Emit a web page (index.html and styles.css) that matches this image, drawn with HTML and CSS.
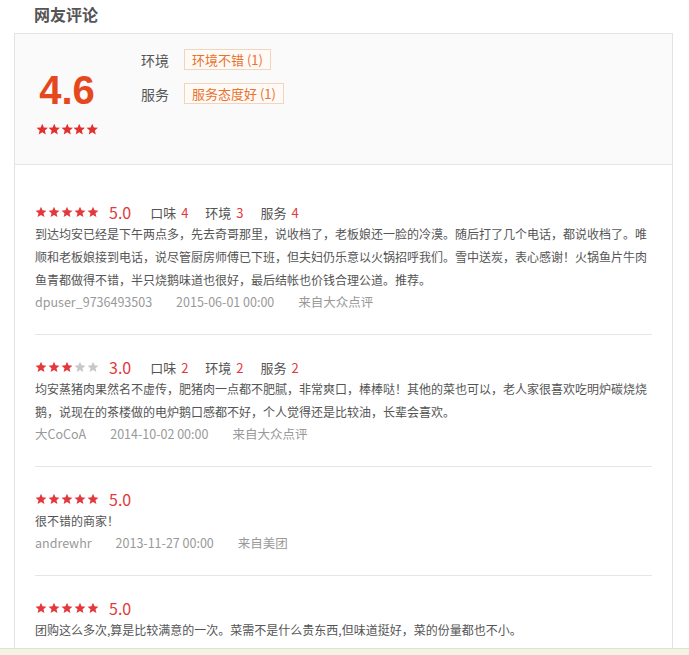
FILE: index.html
```html
<!DOCTYPE html>
<html lang="zh-CN">
<head>
<meta charset="UTF-8" />
<meta name="viewport" content="width=device-width, initial-scale=1" />
<title>网友评论</title>
<link rel="stylesheet" href="styles.css">
</head>
<body>
  <svg class="defs" aria-hidden="true">
    <symbol id="star" viewBox="0 0 24 24">
      <path d="M12 1.5l3.1 7.2 7.8.6-5.9 5.1 1.8 7.6L12 17.9 5.2 22l1.8-7.6-5.9-5.1 7.8-.6z"/>
    </symbol>
  </svg>

  <h2 class="title">网友评论</h2>

  <div class="comments">
    <div class="summary">
      <div class="score">
        <div class="score-num">4.6</div>
        <div class="stars stars-sm">
          <svg class="star"><use href="#star"/></svg>
          <svg class="star"><use href="#star"/></svg>
          <svg class="star"><use href="#star"/></svg>
          <svg class="star"><use href="#star"/></svg>
          <svg class="star"><use href="#star"/></svg>
        </div>
      </div>
      <div class="tags">
        <div class="tag-row">
          <span class="tag-label">环境</span>
          <span class="tag">环境不错 (1)</span>
        </div>
        <div class="tag-row">
          <span class="tag-label">服务</span>
          <span class="tag">服务态度好 (1)</span>
        </div>
      </div>
    </div>

    <ul class="review-list">
      <li class="review">
        <div class="rating">
          <div class="stars">
            <svg class="star"><use href="#star"/></svg>
            <svg class="star"><use href="#star"/></svg>
            <svg class="star"><use href="#star"/></svg>
            <svg class="star"><use href="#star"/></svg>
            <svg class="star"><use href="#star"/></svg>
          </div>
          <span class="rate">5.0</span>
          <span class="sub">口味 <em>4</em></span>
          <span class="sub">环境 <em>3</em></span>
          <span class="sub">服务 <em>4</em></span>
        </div>
        <p class="text">到达均安已经是下午两点多，先去奇哥那里，说收档了，老板娘还一脸的冷漠。随后打了几个电话，都说收档了。唯顺和老板娘接到电话，说尽管厨房师傅已下班，但夫妇仍乐意以火锅招呼我们。雪中送炭，表心感谢！火锅鱼片牛肉鱼青都做得不错，半只烧鹅味道也很好，最后结帐也价钱合理公道。推荐。</p>
        <div class="meta">
          <span>dpuser_9736493503</span>
          <span>2015-06-01 00:00</span>
          <span>来自大众点评</span>
        </div>
      </li>

      <li class="review">
        <div class="rating">
          <div class="stars">
            <svg class="star"><use href="#star"/></svg>
            <svg class="star"><use href="#star"/></svg>
            <svg class="star"><use href="#star"/></svg>
            <svg class="star off"><use href="#star"/></svg>
            <svg class="star off"><use href="#star"/></svg>
          </div>
          <span class="rate">3.0</span>
          <span class="sub">口味 <em>2</em></span>
          <span class="sub">环境 <em>2</em></span>
          <span class="sub">服务 <em>2</em></span>
        </div>
        <p class="text">均安蒸猪肉果然名不虚传，肥猪肉一点都不肥腻，非常爽口，棒棒哒！其他的菜也可以，老人家很喜欢吃明炉碳烧烧鹅，说现在的茶楼做的电炉鹅口感都不好，个人觉得还是比较油，长辈会喜欢。</p>
        <div class="meta">
          <span>大CoCoA</span>
          <span>2014-10-02 00:00</span>
          <span>来自大众点评</span>
        </div>
      </li>

      <li class="review">
        <div class="rating">
          <div class="stars">
            <svg class="star"><use href="#star"/></svg>
            <svg class="star"><use href="#star"/></svg>
            <svg class="star"><use href="#star"/></svg>
            <svg class="star"><use href="#star"/></svg>
            <svg class="star"><use href="#star"/></svg>
          </div>
          <span class="rate">5.0</span>
        </div>
        <p class="text">很不错的商家！</p>
        <div class="meta">
          <span>andrewhr</span>
          <span>2013-11-27 00:00</span>
          <span>来自美团</span>
        </div>
      </li>

      <li class="review">
        <div class="rating">
          <div class="stars">
            <svg class="star"><use href="#star"/></svg>
            <svg class="star"><use href="#star"/></svg>
            <svg class="star"><use href="#star"/></svg>
            <svg class="star"><use href="#star"/></svg>
            <svg class="star"><use href="#star"/></svg>
          </div>
          <span class="rate">5.0</span>
        </div>
        <p class="text">团购这么多次,算是比较满意的一次。菜需不是什么贵东西,但味道挺好，菜的份量都也不小。</p>
      </li>
    </ul>
  </div>

  <div class="bottom-bar"></div>
</body>
</html>
```

FILE: styles.css
```css
:root {
  --red: #e4393c;
  --orange: #e6481e;
  --text: #555;
  --muted: #999;
  --line: #e6e6e6;
}

body {
  margin: 0;
  background: #fff;
  color: var(--text);
  font-family: "Microsoft YaHei", "Noto Sans CJK SC", "Noto Sans", sans-serif;
  font-size: 12px;
}

.defs {
  display: none;
}

.title {
  margin: 0;
  padding-left: 34px;
  height: 33px;
  line-height: 28px;
  font-size: 16px;
  font-weight: bold;
  color: #555;
}

.comments {
  margin-left: 14px;
  width: 659px;
  box-sizing: border-box;
  border: 1px solid #e3e3e3;
  border-bottom: none;
}

/* summary block */
.summary {
  display: flex;
  height: 131px;
  box-sizing: border-box;
  padding: 15px 20px 0;
  background: #fafafa;
  border-bottom: 1px solid var(--line);
}

.score {
  width: 64px;
  text-align: center;
  padding-top: 21px;
}

.score-num {
  font-family: "Liberation Sans", Arial, sans-serif;
  font-size: 40px;
  line-height: 40px;
  font-weight: bold;
  color: var(--orange);
}

.stars {
  display: flex;
  gap: 1px;
}

.stars-sm {
  justify-content: center;
  gap: 0;
  margin-top: 13px;
}

.star {
  width: 12px;
  height: 12px;
  fill: var(--red);
}

.stars-sm .star {
  width: 12.5px;
  height: 12.5px;
  fill: #e0312f;
}

.star.off {
  fill: #c8c8c8;
}

.tags {
  margin-left: 42px;
  display: flex;
  flex-direction: column;
  gap: 13px;
}

.tag-row {
  display: flex;
  align-items: center;
  height: 21px;
}

.tag-label {
  width: 43px;
  font-size: 14px;
  color: #555;
}

.tag {
  height: 21px;
  line-height: 19px;
  box-sizing: border-box;
  padding: 0 7px;
  border: 1px solid #f2d5bf;
  background: #fffaf6;
  color: #e8732f;
  font-size: 13px;
}

/* reviews */
.review-list {
  list-style: none;
  margin: 0;
  padding: 15px 20px 0;
}

.review {
  padding: 22px 0;
  border-bottom: 1px solid var(--line);
}

.rating {
  display: flex;
  align-items: center;
  height: 20px;
}

.rate {
  margin-left: 10px;
  margin-right: 19px;
  font-size: 16px;
  color: var(--red);
}

.sub {
  margin-right: 17px;
  font-size: 13px;
  color: #555;
}

.sub em {
  font-style: normal;
  color: var(--red);
  margin-left: 2px;
}

.text {
  margin: 0;
  line-height: 23px;
  color: var(--text);
}

.meta {
  display: flex;
  gap: 24px;
  line-height: 21px;
  font-size: 12.5px;
  color: var(--muted);
}

.bottom-bar {
  position: fixed;
  left: 0;
  right: 0;
  bottom: 0;
  height: 6px;
  background: #f1f4e3;
  border-top: 1px solid #dfe5cb;
}
```
